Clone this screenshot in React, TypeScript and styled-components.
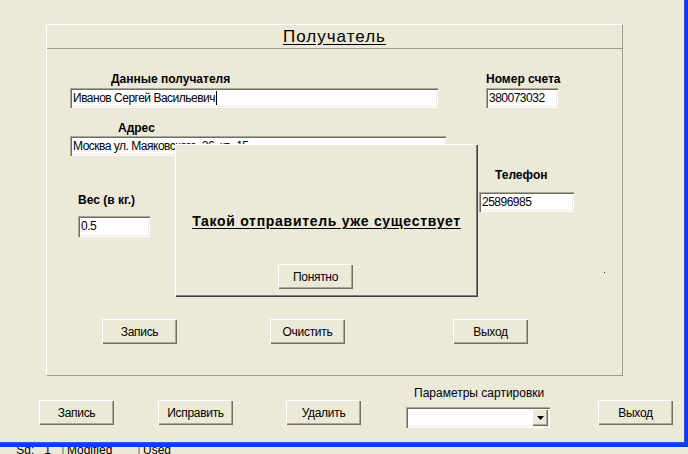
import React from "react";
import styled, { createGlobalStyle } from "styled-components";

const GlobalStyle = createGlobalStyle`
  html, body {
    margin: 0;
    padding: 0;
    width: 688px;
    height: 454px;
    overflow: hidden;
    background: #ece9d8;
    font-family: "Liberation Sans", Arial, sans-serif;
  }
`;

const Screen = styled.div`
  width: 688px;
  height: 454px;
  display: flex;
  flex-direction: column;
  background: #ece9d8;
  color: #000;
`;

const Window = styled.div`
  position: relative;
  box-sizing: border-box;
  width: 688px;
  height: 447px;
  padding-top: 24px;
  border-right: 3px solid #0a3ee8;
  border-bottom: 4px solid #0a3ee8;
  box-shadow: inset -1px -1px 0 #1b5cf0;
`;

const Panel = styled.section`
  box-sizing: border-box;
  width: 577px;
  height: 352px;
  margin-left: 46px;
  border: 1px solid;
  border-color: #fff #a09e92 #a09e92 #fff;
  display: flex;
  flex-direction: column;
`;

const PanelHeader = styled.h1`
  margin: 0;
  height: 23px;
  border-bottom: 1px solid #a09e92;
  font-size: 17px;
  font-weight: normal;
  letter-spacing: 1px;
  line-height: 23px;
  text-align: center;
  text-decoration: underline;
  text-underline-offset: 2px;
`;

const PanelBody = styled.div`
  display: flex;
  flex-direction: column;
  padding-left: 23px;
`;

const Row = styled.div<{ $top: number; $gap?: number }>`
  display: flex;
  align-items: flex-start;
  margin-top: ${(p) => p.$top}px;
  gap: ${(p) => p.$gap ?? 0}px;
`;

const Field = styled.div<{ $left?: number; $top?: number }>`
  display: flex;
  flex-direction: column;
  margin-left: ${(p) => p.$left ?? 0}px;
  margin-top: ${(p) => p.$top ?? 0}px;
`;

const Label = styled.label<{ $indent?: number; $bold?: boolean }>`
  display: block;
  height: 14px;
  padding-left: ${(p) => p.$indent ?? 0}px;
  font-size: 12px;
  font-weight: ${(p) => (p.$bold === false ? "normal" : "bold")};
  line-height: 14px;
  white-space: nowrap;
`;

const TextBox = styled.div<{ $w: number; $h?: number; $top?: number }>`
  box-sizing: border-box;
  width: ${(p) => p.$w}px;
  height: ${(p) => p.$h ?? 20}px;
  margin-top: ${(p) => p.$top ?? 2}px;
  padding: 3px 0 0 3px;
  background: #fff;
  box-shadow: inset 1px 1px 0 #a8a698, inset 2px 2px 0 #716f64,
    inset -1px -1px 0 #fff, inset -2px -2px 0 #f1efe2;
  font-size: 12px;
  letter-spacing: -0.5px;
  line-height: 14px;
  white-space: nowrap;
  overflow: hidden;
`;

const Caret = styled.span`
  display: inline-block;
  width: 1px;
  height: 14px;
  margin-left: 1px;
  vertical-align: top;
  background: #000;
`;

const Dot = styled.span<{ $left: number }>`
  display: block;
  width: 1px;
  height: 1px;
  margin-left: ${(p) => p.$left}px;
  background: #333;
`;

const Button = styled.button<{ $left?: number; $top?: number }>`
  box-sizing: border-box;
  width: 75px;
  height: 25px;
  margin: ${(p) => p.$top ?? 0}px 0 0 ${(p) => p.$left ?? 0}px;
  padding: 0;
  border: none;
  background: #ece9d8;
  box-shadow: inset 1px 1px 0 #fff, inset -1px -1px 0 #716f64,
    inset -2px -2px 0 #aca899;
  font-family: "Liberation Sans", Arial, sans-serif;
  font-size: 12px;
  letter-spacing: -0.3px;
  color: #000;
  flex-shrink: 0;
`;

const Toolbar = styled.div`
  display: flex;
  align-items: flex-start;
  margin-top: 10px;
  padding-left: 39px;
`;

const ComboGroup = styled.div<{ $left: number }>`
  display: flex;
  flex-direction: column;
  width: 144px;
  margin-left: ${(p) => p.$left}px;
`;

const Combo = styled.div`
  box-sizing: border-box;
  display: flex;
  justify-content: flex-end;
  align-items: center;
  width: 144px;
  height: 21px;
  margin-top: 7px;
  padding: 2px;
  background: #fff;
  box-shadow: inset 1px 1px 0 #a8a698, inset 2px 2px 0 #716f64,
    inset -1px -1px 0 #fff, inset -2px -2px 0 #f1efe2;
`;

const ComboArrow = styled.span`
  box-sizing: border-box;
  display: flex;
  align-items: center;
  justify-content: center;
  width: 16px;
  height: 17px;
  background: #ece9d8;
  box-shadow: inset 1px 1px 0 #fff, inset -1px -1px 0 #716f64,
    inset -2px -2px 0 #aca899;
`;

const Dialog = styled.div`
  position: absolute;
  left: 175px;
  top: 144px;
  box-sizing: border-box;
  width: 303px;
  height: 153px;
  display: flex;
  flex-direction: column;
  align-items: center;
  background: #ece9d8;
  box-shadow: inset 1px 1px 0 #fff, inset -1px -1px 0 #404040,
    inset -2px -2px 0 #808080;
`;

const Message = styled.p`
  margin: 68px 0 0;
  font-size: 14px;
  font-weight: bold;
  letter-spacing: 0.7px;
  line-height: 18px;
  text-decoration: underline;
  text-underline-offset: 2px;
  white-space: nowrap;
`;

const DialogButton = styled(Button)`
  margin: 34px 22px 0 0;
`;

const StatusBar = styled.div`
  flex: 1;
  display: flex;
  overflow: hidden;
  font-size: 12px;
  line-height: 14px;
  color: #000;
`;

const StatusCell = styled.span<{ $w: number; $sep?: boolean }>`
  box-sizing: border-box;
  width: ${(p) => p.$w}px;
  padding-left: 3px;
  margin-top: -4px;
  border-left: ${(p) => (p.$sep ? "2px solid #aca899" : "none")};
  white-space: nowrap;
`;

export default function App() {
  return (
    <Screen>
      <GlobalStyle />
      <Window>
        <Panel>
          <PanelHeader>Получатель</PanelHeader>
          <PanelBody>
            <Row $top={23} $gap={48}>
              <Field>
                <Label $indent={41}>Данные получателя</Label>
                <TextBox $w={368}>
                  Иванов Сергей Васильевич
                  <Caret />
                </TextBox>
              </Field>
              <Field>
                <Label>Номер счета</Label>
                <TextBox $w={72}>380073032</TextBox>
              </Field>
            </Row>
            <Row $top={13}>
              <Field>
                <Label $indent={48}>Адрес</Label>
                <TextBox $w={376} $top={1}>
                  Москва ул. Маяковского, 26, кв. 15
                </TextBox>
              </Field>
            </Row>
            <Row $top={12}>
              <Field $left={8} $top={25}>
                <Label>Вес (в кг.)</Label>
                <TextBox $w={72} $h={21} $top={9}>
                  0.5
                </TextBox>
              </Field>
              <Field $left={329}>
                <Label $indent={16}>Телефон</Label>
                <TextBox $w={95} $top={10}>
                  25896985
                </TextBox>
              </Field>
            </Row>
            <Row $top={35}>
              <Dot $left={534} />
            </Row>
            <Row $top={46}>
              <Button $left={32}>Запись</Button>
              <Button $left={93}>Очистить</Button>
              <Button $left={108}>Выход</Button>
            </Row>
          </PanelBody>
        </Panel>
        <Toolbar>
          <Button $top={14}>Запись</Button>
          <Button $top={14} $left={44}>
            Исправить
          </Button>
          <Button $top={14} $left={53}>
            Удалить
          </Button>
          <ComboGroup $left={45}>
            <Label $bold={false} $indent={8}>
              Параметры сартировки
            </Label>
            <Combo>
              <ComboArrow>
                <svg width="7" height="4" viewBox="0 0 7 4">
                  <path d="M0 0h7L3.5 4z" fill="#000" />
                </svg>
              </ComboArrow>
            </Combo>
          </ComboGroup>
          <Button $top={14} $left={48}>
            Выход
          </Button>
        </Toolbar>
        <Dialog role="dialog">
          <Message>Такой отправитель уже существует</Message>
          <DialogButton>Понятно</DialogButton>
        </Dialog>
      </Window>
      <StatusBar>
        <StatusCell $w={62}>&nbsp;&nbsp;&nbsp;&nbsp;Sd:&nbsp;&nbsp;&nbsp;1</StatusCell>
        <StatusCell $w={76} $sep>
          Modified
        </StatusCell>
        <StatusCell $w={120} $sep>
          Used
        </StatusCell>
      </StatusBar>
    </Screen>
  );
}
